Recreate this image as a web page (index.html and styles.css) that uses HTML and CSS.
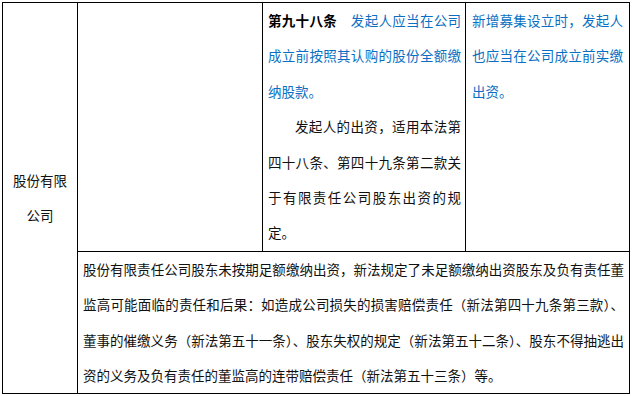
FILE: index.html
```html
<!DOCTYPE html>
<html lang="zh-CN">
<head>
<meta charset="utf-8">
<title>股份有限公司</title>
<link rel="stylesheet" href="styles.css">
</head>
<body>
<div class="tbl">
  <div class="cell c-type"><span>股份有限公司</span></div>
  <div class="cell c-old"></div>
  <div class="cell c-new">
    <p><b class="art">第九十八条</b><span class="blue">　发起人应当在公司成立前按照其认购的股份全额缴纳股款。</span></p>
    <p class="indent">发起人的出资，适用本法第四十八条、第四十九条第二款关于有限责任公司股东出资的规定。</p>
  </div>
  <div class="cell c-note">
    <p class="blue">新增募集设立时，发起人也应当在公司成立前实缴出资。</p>
  </div>
  <div class="cell c-sum">
    <span class="ln">股份有限责任公司股东未按期足额缴纳出资，新法规定了未足额缴纳出资股东及负有责任董</span>
    <span class="ln">监高可能面临的责任和后果：如造成公司损失的损害赔偿责任（新法第四十九条第三款）、</span>
    <span class="ln">董事的催缴义务（新法第五十一条）、股东失权的规定（新法第五十二条）、股东不得抽逃出</span>
    <span class="ln last">资的义务及负有责任的董监高的连带赔偿责任（新法第五十三条）等。</span>
  </div>
</div>
</body>
</html>
```

FILE: styles.css
```css
html, body {
  margin: 0;
  padding: 0;
  background: #ffffff;
}

body {
  font-family: "Noto Sans CJK SC", "Noto Sans", sans-serif;
  font-size: 13.5px;
  line-height: 35.4px;
  color: #111111;
}

.tbl {
  display: grid;
  grid-template-columns: 75px 185px 203px 164px;
  grid-template-rows: 249px 142px;
  margin: 2px 0 0 2px;
  border-left: 1px solid #000000;
  border-top: 1px solid #000000;
  width: max-content;
}

.cell {
  box-sizing: border-box;
  border-right: 1px solid #000000;
  border-bottom: 1px solid #000000;
  min-width: 0;
}

.cell p {
  margin: 0;
  text-align: justify;
}

.c-type {
  grid-row: 1 / 3;
  grid-column: 1;
  display: flex;
  align-items: center;
  justify-content: center;
  text-align: center;
  padding: 0 5px;
}

.c-old {
  grid-row: 1;
  grid-column: 2;
}

.c-new {
  grid-row: 1;
  grid-column: 3;
  padding: 0 4px 0 5px;
}

.c-note {
  grid-row: 1;
  grid-column: 4;
  padding: 0 6px 0 6px;
}

.c-sum {
  grid-row: 2;
  grid-column: 2 / 5;
  padding: 0 5px 0 5px;
}

.art {
  font-weight: 700;
  color: #000000;
}

.blue {
  color: #0a6fc2;
}

.indent {
  text-indent: 2em;
}

.ln {
  display: block;
  white-space: nowrap;
  text-align: justify;
  text-align-last: justify;
}

.ln.last {
  text-align-last: auto;
}
```
